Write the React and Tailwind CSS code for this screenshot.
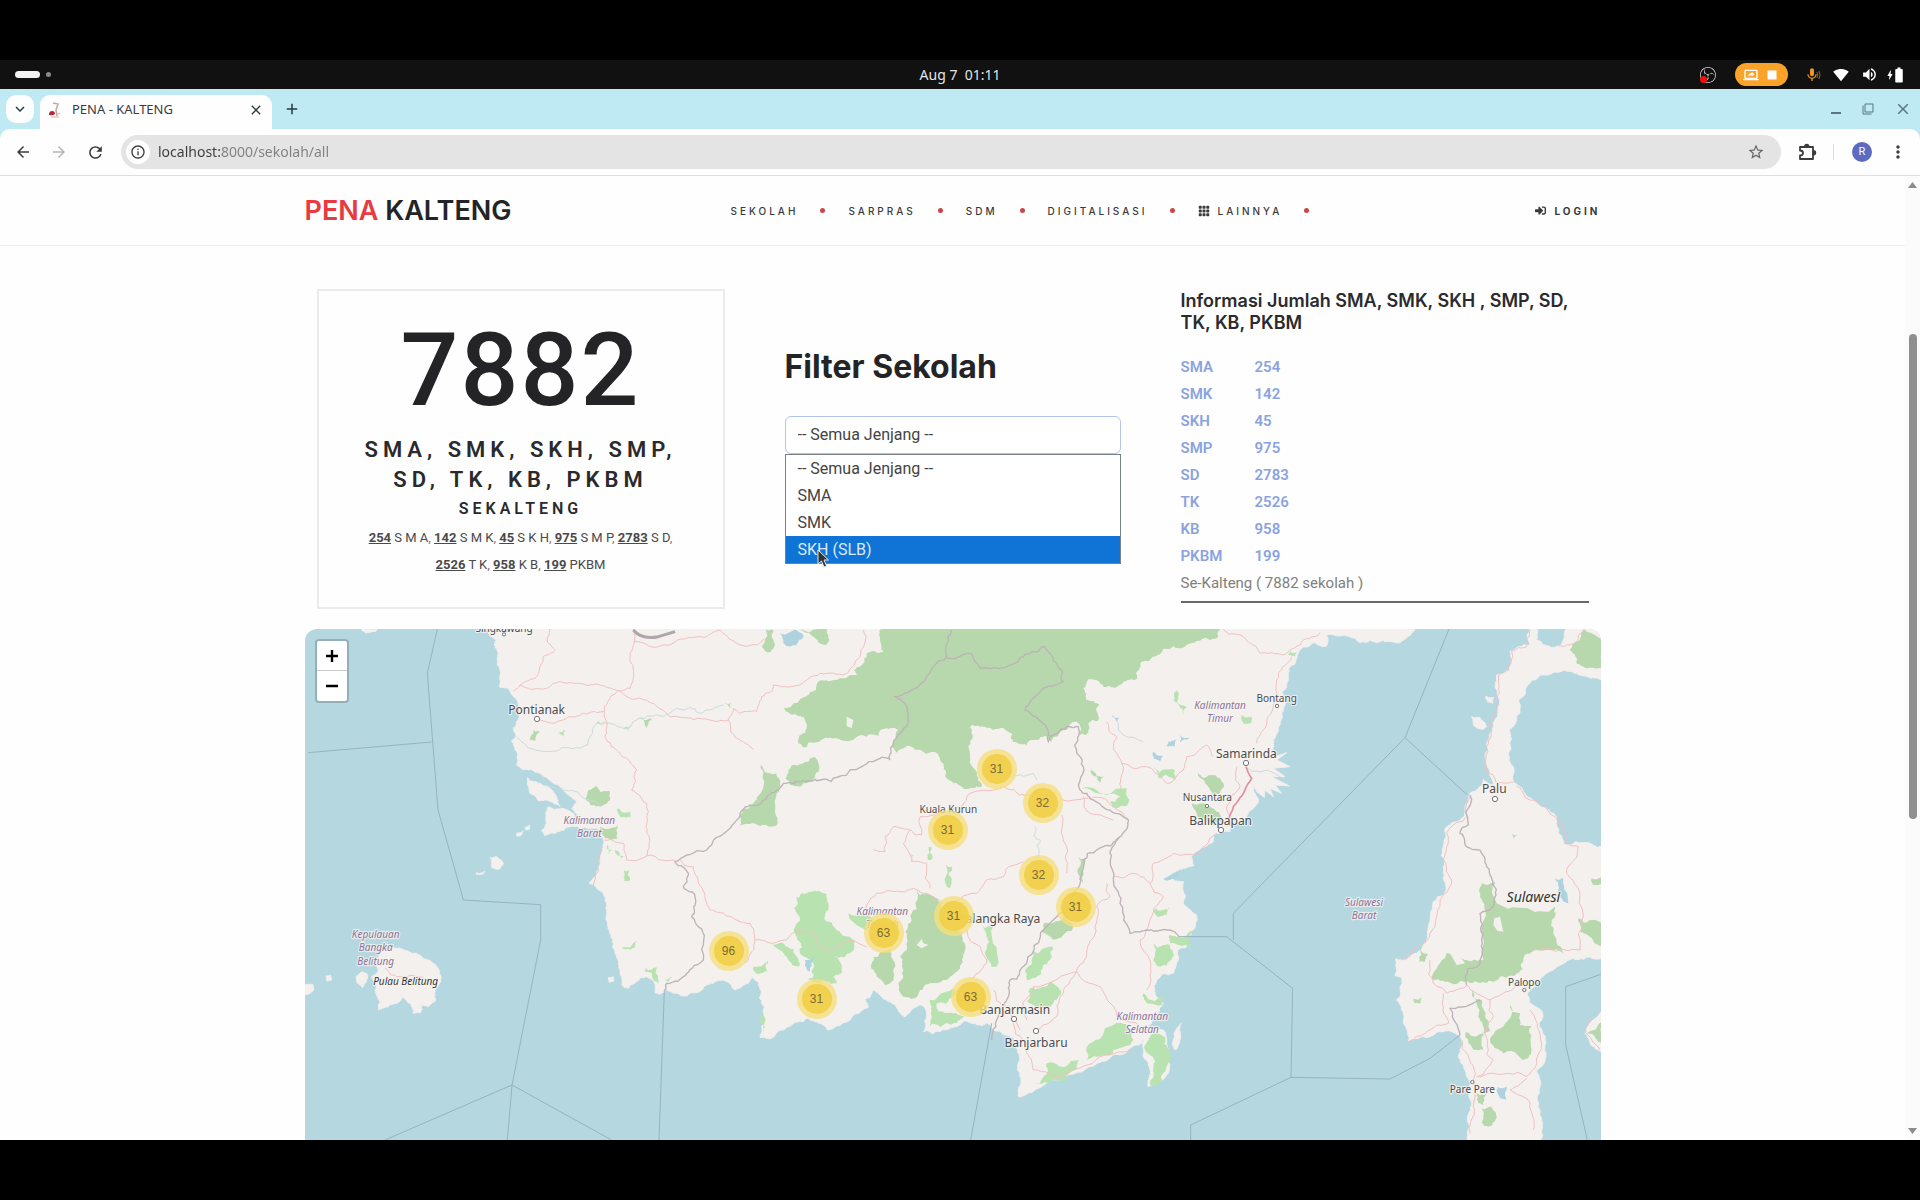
import React from "react";
import {
  MdStarBorder, MdInfoOutline, MdArrowBack, MdArrowForward, MdRefresh,
  MdClose, MdAdd, MdKeyboardArrowDown, MdMoreVert, MdMic, MdSignalWifi4Bar, MdVolumeUp,
  MdBatteryFull, MdBolt, MdOutlineScreenShare, MdStop, MdFilterNone,
} from "react-icons/md";
import { SiObsstudio } from "react-icons/si";
import { BsGrid3X3GapFill } from "react-icons/bs";
import { FaSignInAlt } from "react-icons/fa";

/* ---------- map geometry ---------- */

function rough(points, amp, closed) {
  let seed = 7;
  const rnd = () => {
    seed = (seed * 16807) % 2147483647;
    return seed / 2147483647 - 0.5;
  };
  let pts = [];
  for (let i = 0; i < points.length; i += 2) pts.push([points[i], points[i + 1]]);
  if (closed) pts.push(pts[0]);
  for (let pass = 0; pass < 3; pass++) {
    const out = [];
    for (let i = 0; i < pts.length - 1; i++) {
      const [ax, ay] = pts[i];
      const [bx, by] = pts[i + 1];
      const len = Math.hypot(bx - ax, by - ay);
      out.push(pts[i]);
      if (len > 7) {
        const k = Math.min(len, 60) * amp;
        out.push([(ax + bx) / 2 + rnd() * k, (ay + by) / 2 + rnd() * k]);
      }
    }
    out.push(pts[pts.length - 1]);
    pts = out;
  }
  return "M" + pts.map((p) => p[0].toFixed(0) + " " + p[1].toFixed(0)).join("L") + (closed ? "Z" : "");
}

const LAND = [
  [560,10,590,60,583,75,595,100,592,130,600,165,598,200,630,212,650,240,658,280,650,310,640,325,648,345,635,362,645,390,650,435,670,450,700,452,725,465,760,490,790,510,812,530,830,545,815,565,835,590,862,622,900,632,912,665,905,700,900,735,890,765,868,790,900,812,915,840,920,870,918,900,930,940,937,980,945,1000,955,1030,960,1060,965,1095,985,1105,1010,1085,1040,1070,1065,1092,1065,1118,1080,1122,1100,1110,1130,1120,1160,1128,1200,1115,1240,1090,1280,1085,1305,1110,1325,1100,1345,1090,1355,1070,1375,1085,1382,1110,1385,1150,1392,1200,1386,1235,1380,1252,1415,1255,1450,1230,1480,1210,1520,1195,1545,1205,1582,1230,1610,1218,1650,1200,1706,1160,1695,1140,1718,1110,1740,1125,1770,1145,1795,1172,1812,1190,1840,1165,1862,1155,1875,1165,1880,1190,1875,1225,1870,1235,1920,1235,1970,1220,2000,1203,2030,1215,2060,1208,2080,1230,2120,1245,2142,1255,2155,1300,2153,1350,2158,1400,2155,1430,2200,1415,2280,1380,2360,1345,2440,1305,2500,1280,2525,1270,2540,1230,2560,1190,2590,1150,2565,1125,2570,1080,2620,1060,2632,1000,2640,985,2660,980,2655,960,2680,930,2690,885,2660,860,2650,850,2650,785,2610,770,2650,745,2680,738,2678,705,2710,682,2740,665,2738,645,2790,635,2835,605,2855,570,2875,545,2860,510,2870,480,2900,440,2920,400,2920,370,2935,330,2945,280,2955,240,2945,215,2965,170,2970,140,2990,115,3005,85,3040,68,3078,80,3080,45,3100,45,3180,68,3210,60,3230,68,3250,62,3300,68,3340,35,3350,10],
  [3690,10,3690,75,3630,95,3628,150,3590,165,3585,200,3595,230,3580,310,3560,370,3558,430,3575,475,3580,495,3550,478,3510,520,3495,570,3470,605,3435,625,3430,680,3430,740,3438,800,3432,822,3412,830,3395,870,3385,920,3380,960,3350,1000,3310,1020,3288,1015,3285,1068,3305,1075,3300,1130,3290,1140,3305,1170,3310,1210,3325,1262,3370,1250,3430,1235,3480,1245,3485,1280,3475,1310,3495,1350,3510,1400,3515,1450,3510,1520,3505,1575,3720,1575,3725,1500,3715,1460,3720,1400,3710,1350,3738,1305,3728,1240,3728,1180,3690,1150,3682,1120,3720,1080,3770,1040,3820,1015,3860,1012,3930,1022,3930,680,3850,668,3830,665,3800,675,3775,640,3770,590,3740,565,3710,548,3670,515,3645,490,3640,440,3625,400,3628,330,3650,290,3655,240,3690,190,3720,165,3790,150,3830,160,3870,175,3930,175,3930,10,3810,10,3790,60,3775,78,3730,75,3710,60,3710,10],
  [683,473,700,485,750,505,770,530,780,560,740,540,715,542,690,520],
  [745,560,790,565,820,580,825,600,870,605,890,620,840,625,800,622,765,640,735,647,724,632,738,600],
  [570,713,590,710,610,730,595,748,575,742],
  [235,1050,240,1000,290,985,350,1000,395,1025,415,1045,422,1080,405,1110,405,1145,385,1160,365,1155,362,1178,340,1180,330,1150,305,1130,290,1150,265,1160,235,1170,240,1145,228,1120,215,1070],
  [168,1070,185,1055,203,1065,195,1090,188,1103,170,1088],
  [0,1085,40,1095,42,1110,25,1122,0,1120],
  [78,1067,92,1065,95,1080,82,1084],
  [2528,1270,2540,1225,2590,1230,2602,1280,2610,1335,2600,1365,2560,1392,2545,1400,2550,1350,2530,1310],
  [2622,1240,2643,1210,2640,1260,2626,1290,2616,1270],
  [3905,1175,3870,1210,3855,1240,3870,1270,3905,1295],
  [3515,290,3540,292,3560,320,3545,328,3520,315],
  [3558,228,3580,232,3578,250,3562,245],
  [925,1072,940,1070,942,1083,928,1087],
  [650,640,670,632,665,645,652,650],
  [675,622,690,615,688,628,678,630],
  [530,758,555,755,550,762,530,764],
  [180,20,250,20,225,35,195,38],
];

const DELTA = "M2870 430L2960 398L2930 420L2970 440L2920 445L2955 470L2915 470L2968 498L2925 495L2945 520L2910 505L2920 530L2895 510L2893 532L2870 515L2850 470Z";

const FOREST = [
  [1755,10,1740,60,1752,95,1700,100,1690,130,1660,150,1672,165,1610,180,1565,180,1530,215,1480,250,1452,265,1470,282,1510,290,1520,320,1500,345,1495,370,1510,382,1560,362,1610,355,1700,350,1760,325,1795,330,1775,380,1790,398,1830,378,1850,390,1900,395,1930,430,1935,470,1960,490,2010,505,2045,500,2035,480,2010,430,2005,380,2015,340,2010,322,2050,320,2080,330,2110,325,2135,340,2140,365,2180,378,2200,360,2230,350,2255,365,2290,330,2330,305,2340,345,2365,335,2365,310,2395,300,2398,255,2360,240,2350,205,2365,178,2410,200,2470,185,2512,175,2525,125,2560,110,2620,78,2700,62,2755,50,2775,10],
  [1382,435,1430,460,1440,490,1430,520,1428,618,1320,616,1320,585,1370,540,1390,500],
  [1480,435,1520,425,1545,412,1558,440,1545,470,1500,500,1470,495,1455,475],
  [1850,812,1890,825,1925,850,1930,910,1985,940,1992,1000,1975,1050,1940,1080,1890,1090,1860,1110,1845,1135,1810,1130,1795,1090,1810,1050,1800,1010,1820,950,1835,880],
  [1720,1010,1770,990,1785,1040,1770,1090,1755,1095,1730,1070,1712,1040],
  [2232,910,2290,890,2320,920,2290,945,2260,960,2225,935],
  [2335,712,2355,715,2350,790,2338,780],
  [1398,27,1420,30,1420,85,1405,97,1385,80],
  [1500,27,1580,27,1588,60,1575,75,1540,50],
  [2690,460,2740,465,2770,490,2760,520,2735,520,2715,490],
  [3808,90,3840,60,3850,27,3905,60,3905,145,3860,145,3830,130],
  [3585,785,3545,790,3540,830,3555,870,3550,1020,3505,1022,3470,1010,3440,1000,3415,1035,3395,1075,3430,1082,3490,1085,3540,1090,3600,1070,3650,1060,3670,1020,3710,990,3790,1000,3770,960,3755,900,3765,860,3590,850],
  [3835,895,3880,900,3905,910,3905,980,3870,950,3840,935],
  [3630,1150,3660,1180,3660,1215,3695,1220,3695,1290,3670,1320,3640,1295,3610,1300,3570,1260,3590,1230,3610,1220],
  [3515,1110,3545,1140,3555,1190,3570,1230,3550,1240,3535,1190],
  [3498,1235,3550,1240,3548,1290,3520,1290],
  [3362,990,3385,1000,3375,1025,3358,1025],
  [3340,1135,3365,1133,3362,1150,3345,1150],
  [3530,1420,3560,1420,3550,1455,3535,1450],
  [3545,1465,3575,1460,3590,1490,3565,1520,3545,1510],
  [3860,1240,3905,1205,3905,1270],
  [700,330,720,332,705,362,688,360],
  [1020,290,1055,295,1040,325],
  [2370,450,2410,470,2400,488],
  [3875,775,3905,770,3905,795,3878,795],
  [2675,550,2700,550,2750,575,2770,600,2740,610,2690,590],
  [900,620,953,615,953,660,915,655],
  [865,510,890,498,900,515,930,512,930,540,900,560,870,555,858,540,862,520],
];

const GROVE = [
  [955,565,995,572,992,592,960,592],
  [1035,1045,1070,1042,1075,1090,1060,1080,1055,1058,1035,1056],
  [965,982,1010,962,1005,985,975,988],
  [972,750,987,750,987,783,973,783],
  [1090,1078,1115,1070,1105,1085],
  [2345,505,2480,505,2485,550,2450,565,2430,545,2460,530],
  [1490,830,1530,815,1570,820,1585,850,1575,900,1610,930,1660,960,1650,1000,1600,1010,1625,1060,1600,1070,1610,1090,1570,1080,1560,1090,1520,1080,1540,1030,1500,1000,1490,950,1500,900,1482,865],
  [1410,965,1450,970,1490,1010,1495,1040,1465,1020],
  [1360,1040,1405,1020,1400,1055,1370,1062],
  [1645,880,1700,870,1720,900,1700,930],
  [1890,1140,1960,1105,1970,1120,1910,1150,1915,1175,1960,1180,2000,1190,1960,1210,1890,1220,1892,1180],
  [2045,915,2080,920,2090,1040,2075,1040,2060,980],
  [2200,990,2260,985,2250,1020,2230,1035,2220,1065,2180,1080,2175,1050],
  [2190,1105,2250,1085,2280,1110,2260,1150,2210,1165,2180,1145],
  [2360,1280,2440,1215,2480,1215,2500,1260,2440,1290,2360,1320],
  [2240,1330,2340,1320,2330,1335,2300,1370,2200,1390,2240,1360],
  [2535,1290,2560,1240,2595,1250,2605,1330,2570,1395,2550,1395,2560,1340],
  [2560,970,2610,975,2620,1010,2580,1040,2560,1020],
  [2530,1120,2590,1130,2590,1160,2540,1150],
  [2565,865,2610,860,2600,885,2570,890],
  [2610,945,2680,930,2670,985,2610,970],
  [2825,285,2860,285,2855,310,2830,312],
  [2970,92,2995,95,2985,110,2965,105],
  [1940,735,1955,740,1950,805,1940,800],
  [1885,680,1895,680,1893,720,1885,720],
  [1830,700,1840,705,1835,720],
  [1385,1180,1395,1220,1388,1240],
  [2560,440,2625,450,2625,480,2600,465,2575,475],
  [775,335,795,330,790,352],
  [965,320,990,318,985,332],
  [1275,250,1293,248,1290,265],
  [890,305,915,305,910,315],
  [2630,210,2660,260,2650,285,2620,240],
  [920,675,935,690,925,705],
  [945,690,975,708,965,716],
];

const LAKES = [
  [1440,40,1490,30,1510,50,1470,80,1450,70],
  [2560,395,2595,405,2580,425,2560,415],
  [2605,365,2630,355,2625,380,2600,378],
  [2640,340,2670,355,2640,368],
  [2590,775,2640,745,2635,770,2600,782],
  [3765,775,3790,775,3805,850,3790,845,3775,810],
  [3592,1400,3620,1400,3618,1440,3600,1435],
  [3637,642,3650,645,3640,658],
  [2435,285,2460,292,2450,305],
  [1515,1020,1545,1010,1530,1055,1520,1050],
];

const ROADS = [
  [750,27,745,70,765,90,730,110,715,160,660,195,640,215],
  [660,195,740,205,780,185,830,190,900,195,953,212,990,205,1000,150,990,100,1005,65,1000,27],
  [1000,65,1110,75,1200,50,1260,30,1320,75,1370,75,1395,55],
  [953,212,1040,240,1110,290,1200,295,1285,300,1300,265,1320,280,1370,275,1385,230,1415,215,1420,195,1500,195,1560,160,1640,160,1680,110,1690,30],
  [1285,300,1320,360,1360,388],
  [953,212,912,260,920,320,915,350,960,400,1010,450,995,510,1045,575,1040,640,1050,660,1040,708,1125,722],
  [720,300,790,300,830,288,880,275,912,275],
  [1040,708,980,720,970,670,912,660],
  [905,680,895,750,880,795],
  [1140,720,1180,740,1195,790,1215,830,1230,870,1320,905,1350,910,1365,960,1360,990,1335,1030],
  [1365,960,1460,960,1500,930,1540,940,1570,990,1650,960,1700,980],
  [1690,870,1730,820,1800,815,1840,805,1890,825,1930,850,2030,820,2060,780,2110,770,2120,745,2170,725],
  [1890,805,1880,730,1835,725,1810,670,1830,630,1780,620,1755,650,1755,695,1720,690],
  [1830,630,1865,645,1860,590,1920,580,1980,560,2010,520,2110,500,2160,525,2220,520],
  [2280,535,2350,535,2420,540,2480,600],
  [2285,585,2300,680,2300,760],
  [2420,305,2450,350,2440,390,2465,430,2465,510],
  [2465,430,2540,440,2600,490,2650,450,2660,410,2720,375,2740,410],
  [2350,530,2370,580,2440,600],
  [2760,20,2830,50,2880,100,2960,100,3010,60,3060,38],
  [2975,110,2935,160,2930,230,2900,300,2870,370],
  [2810,440,2820,500,2780,560,2790,620],
  [2440,770,2500,760,2550,790,2560,730,2620,700,2680,705,2750,640],
  [2550,790,2590,830,2550,900,2520,960,2550,1020,2540,1110],
  [2420,790,2430,830,2390,860,2385,920,2360,1000,2330,1055,2200,1100,2170,1160,2180,1200],
  [2330,1055,2280,1130,2270,1190,2210,1230],
  [2330,1055,2400,1100,2450,1190,2520,1220],
  [2140,1210,2170,1260,2200,1350,2280,1370,2400,1310,2500,1280],
  [2000,930,2040,980,2060,1030,2010,1080],
  [2080,1110,2120,1160,2160,1230],
  [3690,30,3680,80,3635,95,3625,150,3595,165,3590,230,3575,330,3560,380,3560,450,3590,490,3640,488],
  [3775,78,3830,65,3850,30],
  [3510,525,3500,590,3440,640,3430,720,3455,780,3420,850,3390,940,3330,1010,3305,1020],
  [3650,500,3720,550,3775,600,3800,670,3835,680,3800,760,3840,820,3840,990,3700,990],
  [3390,1020,3400,1090,3440,1120,3500,1095,3570,1140,3650,1090],
  [3430,1120,3445,1210,3390,1230,3330,1262],
  [3570,1140,3580,1190,3555,1240,3560,1300,3580,1320,3530,1370],
  [3485,1260,3500,1300,3520,1340,3520,1460,3510,1540],
  [3530,1370,3570,1360,3680,1370,3710,1330,3725,1270,3690,1170],
  [3680,1375,3630,1410,3690,1450,3700,1530],
  [255,1045,310,1070,370,1072],
  [3868,1200,3858,1240,3900,1290],
];

const BORDERS = [
  [1955,30,1940,110,1880,170,1835,210,1785,230,1820,260,1825,300,1780,370,1770,420,1740,415,1650,450,1560,480,1500,485,1450,490,1400,530,1350,555,1320,580,1290,625,1220,690,1125,725,1165,760,1150,800,1185,830,1175,890,1195,920,1210,1020,1160,1060,1100,1090,1093,1112],
  [1940,115,2010,100,2040,145,2120,140,2170,110,2235,80,2270,130,2290,185,2230,205,2175,270,2230,310,2245,365,2300,320,2335,320,2325,380,2350,440,2340,510,2370,535,2430,570,2485,600,2460,650,2390,690,2350,720,2340,790,2310,850,2230,930,2180,1030,2130,1080,2120,1140,2090,1200,2075,1260],
  [2460,650,2430,700,2440,780,2460,850,2490,940,2540,930,2600,930,2640,950],
  [3510,525,3505,610,3480,640,3500,680,3540,690,3560,740,3583,800,3580,860,3540,880,3545,960,3540,1030,3505,1045,3500,1095],
  [3540,1140,3450,1165,3480,1245],
];

const SEA_LINES = [
  "M412 27L382 160L414 570L482 810L490 840L722 854V960L636 1395L622 1560",
  "M25 398L395 366", "M636 1395L400 1497L255 1560", "M636 1395L935 1560", "M1093 1112L1077 1560",
  "M2075 1210L2012 1560", "M3447 27L3315 353L2800 880V960", "M3315 353L3502 525",
  "M2640 950H2780L2978 1105L2973 1372L3270 1377L3390 1315L3480 1245", "M2973 1372L2672 1515V1560",
  "M3905 1062L3797 1100V1275L3862 1560",
];

const CITIES = [
  [612, 35, 30, "Singkawang", 612, 43], [710, 282, 36, "Pontianak", 711, 297], [2930, 245, 30, "Bontang", 2931, 258],
  [2839, 413, 36, "Samarinda", 2838, 429], [2722, 544, 30, "Nusantara", 2721, 558], [2762, 614, 36, "Balikpapan", 2763, 630],
  [3583, 520, 36, "Palu", 3585, 537], [3673, 1098, 30, "Palopo", 3673, 1110], [3517, 1418, 30, "Pare Pare", 3517, 1386],
  [1945, 580, 30, "Kuala Kurun"], [2098, 909, 36, "Palangka Raya"], [2144, 1183, 36, "Banjarmasin", 2142, 1197],
  [2208, 1281, 36, "Banjarbaru", 2208, 1233],
];

const REGIONS = [
  [868, 612, "Kalimantan", "Barat"], [2760, 266, "Kalimantan", "Timur"], [1747, 884, "Kalimantan", "Tengah"],
  [2527, 1200, "Kalimantan", "Selatan"], [3192, 857, "Sulawesi", "Barat"], [227, 954, "Kepulauan", "Bangka", "Belitung"],
];

function MapArt() {
  return (
    <svg className="absolute inset-0 h-full w-full" viewBox="15 27 3888 1533" preserveAspectRatio="xMinYMin slice" role="img" aria-label="Peta Kalimantan" fontFamily="Noto Sans, sans-serif">
      <rect x="0" y="0" width="4000" height="3000" fill="#b4d7e0" />
      <g fill="#f4f0ed" stroke="#f1eeee" strokeWidth="3" strokeLinejoin="round">
        {LAND.map((p, i) => <path key={i} d={rough(p, 0.3, true)} />)}
        <path d={DELTA} />
      </g>
      <g fill="#b7d8ac">{FOREST.map((p, i) => <path key={i} d={rough(p, 0.42, true)} />)}</g>
      <g fill="#b9e2b1">{GROVE.map((p, i) => <path key={i} d={rough(p, 0.5, true)} />)}</g>
      <g fill="#f4f0ed">
        <path d="M3583 895L3600 890L3610 935L3592 932L3580 915ZM1850 975L1865 957L1870 970L1885 975L1865 985ZM3450 1000L3470 995L3495 1030L3470 1035ZM1640 290L1660 300L1655 325L1640 318Z" />
      </g>
      <g fill="#aed3df">{LAKES.map((p, i) => <path key={i} d={rough(p, 0.4, true)} />)}</g>
      <g fill="none" stroke="#cbdcdc" strokeWidth="3">
        <path d={rough([650,350,740,395,840,385,890,310,920,310,970,325,1010,300,1090,290,1130,265,1200,280,1270,255], 0.4)} />
        <path d={rough([725,465,790,510,840,525,900,560], 0.4)} />
        <path d={rough([2205,620,2220,660,2215,710], 0.5)} />
        <path d={rough([2120,455,2200,460,2210,480], 0.4)} />
        <path d={rough([2840,445,2900,450,2955,480], 0.3)} />
        <path d={rough([2450,300,2480,350,2530,365], 0.3)} />
      </g>
      <g fill="none" stroke="#f1c0c1" strokeWidth="3">{ROADS.map((p, i) => <path key={i} d={rough(p, 0.3)} />)}</g>
      <path d={rough([2838, 440, 2855, 475, 2830, 520, 2800, 560, 2785, 600], 0.1)} fill="none" stroke="#e0909f" strokeWidth="5" />
      <g fill="none" stroke="#bdb3b8" strokeWidth="4">{BORDERS.map((p, i) => <path key={i} d={rough(p, 0.35)} />)}</g>
      <path d="M1000 30Q1025 60 1075 50L1125 35" fill="none" stroke="#b0a5ab" strokeWidth="9" />
      <g fill="none" stroke="#97b3c2" strokeWidth="3">{SEA_LINES.map((d) => <path key={d} d={d} />)}</g>
      <g textAnchor="middle" stroke="#f6f4f3" strokeOpacity="0.75" strokeWidth="7" strokeLinejoin="round" paintOrder="stroke">
        {REGIONS.map(([x, y, ...lines], i) => (
          <text key={i} fontSize="30" fontStyle="italic" fill="#8d7396">
            {lines.map((t, n) => <tspan key={t} x={x} y={y + n * 40}>{t}</tspan>)}
          </text>
        ))}
        {CITIES.map(([x, y, s, t]) => <text key={t} x={x} y={y} fontSize={s} fill="#4c4c4c">{t}</text>)}
        <text x="317" y="1094" fontSize="30" fontStyle="italic" fill="#333333">Pulau Belitung</text>
        <text x="3700" y="847" fontSize="42" fontStyle="italic" fill="#333333">Sulawesi</text>
      </g>
      <g fill="#ffffff" stroke="#777777" strokeWidth="3">
        {CITIES.filter((c) => c.length > 4).map((c) => <circle key={c[3]} cx={c[4]} cy={c[5]} r={c[2] === 36 ? 8 : 5} />)}
      </g>
    </svg>
  );
}

const CLUSTERS = [
  [692, 140, 31], [738, 174, 32], [643, 201, 31], [734, 246, 32], [771, 278, 31],
  [649, 287, 31], [579, 304, 63], [666, 368, 63], [512, 370, 31], [424, 322, 96],
];

function SchoolMap() {
  return (
    <section className="relative min-h-0 flex-1 overflow-hidden rounded-t-xl">
      <MapArt />
      {CLUSTERS.map(([x, y, n]) => (
        <button key={x} className="absolute flex size-10 -translate-x-1/2 -translate-y-1/2 items-center justify-center rounded-full bg-[#f5de7d]/80" style={{ left: x, top: y }}>
          <span className="flex size-[30px] items-center justify-center rounded-full bg-[#f1cf45]/90 font-['Liberation_Sans',sans-serif] text-xs text-[#7d6b35]">{n}</span>
        </button>
      ))}
      <div className="absolute top-2.5 left-2.5 flex w-[34px] flex-col overflow-hidden rounded border-2 border-[#93b0b8] bg-white">
        <button aria-label="Zoom in" className="flex h-[30px] items-center justify-center border-b border-[#cccccc]">
          <svg width="14" height="14" viewBox="0 0 14 14" stroke="#000" strokeWidth="2.4"><path d="M1 7H13M7 1V13" /></svg>
        </button>
        <button aria-label="Zoom out" className="flex h-[30px] items-center justify-center">
          <svg width="14" height="14" viewBox="0 0 14 14" stroke="#000" strokeWidth="2.4"><path d="M1 7H13" /></svg>
        </button>
      </div>
    </section>
  );
}

/* ---------- desktop and browser chrome ---------- */

function SystemBar() {
  return (
    <div className="grid h-[29px] shrink-0 grid-cols-3 items-center bg-[#111111] font-['Noto_Sans',sans-serif] text-white">
      <div className="flex items-center gap-1.5 pl-[15px]">
        <span className="h-[7px] w-[25px] rounded-full bg-[#f2f2f2]" />
        <span className="size-[5px] rounded-full bg-[#8a8a8a]" />
      </div>
      <div className="text-center text-sm leading-5 whitespace-pre text-[#e4e4e4]">Aug 7  01:11</div>
      <div className="flex items-center justify-end pr-3">
        <span className="relative mr-[19px]">
          <SiObsstudio className="size-4 text-[#d8d8d8]" />
          <span className="absolute bottom-0 left-0 size-[7px] rounded-full bg-[#ee1111]" />
        </span>
        <span className="mr-4 flex h-[23px] w-[53px] items-center justify-center gap-1 rounded-full bg-[#f9a32a]">
          <MdOutlineScreenShare className="size-4" />
          <MdStop className="size-[18px]" />
        </span>
        <span className="mr-3 flex items-center">
          <MdMic className="size-4 text-[#f0981f]" />
          <svg width="5" height="10" viewBox="0 0 5 10" fill="none" stroke="#94611c" className="-ml-1"><path d="M1 2Q2.500 5 1 8M3 1Q5 5 3 9" /></svg>
        </span>
        <MdSignalWifi4Bar className="mr-3 size-4" />
        <MdVolumeUp className="mr-1.5 size-[17px]" />
        <MdBolt className="-mr-1.5 size-3" />
        <MdBatteryFull className="size-[18px]" />
      </div>
    </div>
  );
}

function TabStrip() {
  return (
    <div className="flex h-10 shrink-0 items-start bg-[#bfeaf3] pt-1.5 pl-1.5 text-[#2b3a40]">
      <button aria-label="Search tabs" className="mr-1.5 flex size-7 items-center justify-center rounded-[10px] bg-[#fdfefe]">
        <MdKeyboardArrowDown className="size-[18px]" />
      </button>
      <div className="flex h-[34px] w-[232px] items-center rounded-t-[10px] bg-[#fefefe] pb-1 pl-2">
        <svg width="14" height="16" viewBox="0 0 14 16" fill="none">
          <path d="M5 1L10 2L8 8L9 14" stroke="#c9a9a3" strokeWidth="1.600" />
          <path d="M1 13Q1 9 4 9Q7 9 7 12Q5 14 1 13Z" fill="#a82c34" />
          <path d="M8 13L12 11M3 15L11 15" stroke="#e4a9a9" />
        </svg>
        <span className="ml-2.5 flex-1 font-['Noto_Sans',sans-serif] text-[13px] text-[#3b3b3b]">PENA - KALTENG</span>
        <button aria-label="Close tab" className="mr-2"><MdClose className="size-4" /></button>
      </div>
      <button aria-label="New tab" className="ml-1.5 flex size-7 items-center justify-center"><MdAdd className="size-[18px]" /></button>
      <div className="ml-auto flex h-7 items-center gap-4 pr-2 text-[#5a7488]">
        <button aria-label="Minimize" className="mr-1"><svg width="12" height="12" viewBox="0 0 12 12" fill="currentColor"><path d="M1 9H11V11H1Z" /></svg></button>
        <button aria-label="Restore" className="mr-1"><MdFilterNone className="size-3" /></button>
        <button aria-label="Close window"><MdClose className="size-[18px]" /></button>
      </div>
    </div>
  );
}

function Toolbar() {
  return (
    <div className="bg-[#bfeaf3]">
      <div className="flex h-[47px] items-center rounded-t-[10px] border-b border-[#dedede] bg-[#fefefe] pr-3 pl-3.5 text-[#3c3c3c]">
        <button aria-label="Back" className="mr-[18px]"><MdArrowBack className="size-[18px]" /></button>
        <button aria-label="Forward" className="mr-[18px] text-[#b5b5b5]"><MdArrowForward className="size-[18px]" /></button>
        <button aria-label="Reload" className="mr-4"><MdRefresh className="size-[19px]" /></button>
        <div className="flex h-[34px] flex-1 items-center rounded-full bg-[#e4e4e4] pr-4 pl-[5px]">
          <span className="flex size-6 items-center justify-center rounded-full bg-white"><MdInfoOutline className="size-4" /></span>
          <input
            aria-label="Address"
            className="ml-2 min-w-0 flex-1 bg-[linear-gradient(90deg,#3c3c3c_64px,#808080_64px)] bg-clip-text font-['Noto_Sans',sans-serif] text-sm text-transparent"
            defaultValue="localhost:8000/sekolah/all"
          />
          <button aria-label="Bookmark"><MdStarBorder className="size-[18px] text-[#666666]" /></button>
        </div>
        <button aria-label="Extensions" className="ml-[17px]">
          <svg width="19" height="19" viewBox="0 0 19 19" fill="none" stroke="currentColor" strokeWidth="1.800" strokeLinejoin="round">
            <path d="M2 4H15V16H2V12.500Q5 12.500 5 10Q5 7.500 2 7.500Z" />
            <path d="M7 3.500A1.800 1.800 0 0 1 10.600 3.500ZM15.500 8A1.800 1.800 0 0 1 15.500 11.600Z" fill="currentColor" />
          </svg>
        </button>
        <span className="mx-4 h-4 w-px bg-[#bfe6ea]" />
        <button className="ml-0.5 flex size-5 items-center justify-center rounded-full bg-[#5c6bc0] font-['Roboto',sans-serif] text-[11px] text-white">R</button>
        <button aria-label="Menu" className="ml-4"><MdMoreVert className="size-5" /></button>
      </div>
    </div>
  );
}

/* ---------- site ---------- */

const NAV = ["SEKOLAH", "SARPRAS", "SDM", "DIGITALISASI", "LAINNYA"];

function Navbar() {
  return (
    <header className="shrink-0 border-b border-[#efefef]">
      <div className="mx-auto flex h-[69px] max-w-[1296px] items-center justify-between font-['Inter',sans-serif] text-[#3a3a3a]">
        <a href="#home" className="w-[426px] text-[27px] leading-8 font-semibold text-[#232426]"><span className="text-[#e83b41]">PENA</span> KALTENG</a>
        <nav className="flex flex-1 items-center text-[10px] leading-4 tracking-[3px]">
          {NAV.map((t) => (
            <a key={t} href={"#" + t.toLowerCase()} className="flex items-center font-medium">
              {t === "LAINNYA" && <BsGrid3X3GapFill className="mr-2 size-3" />}
              {t}
              <span className="mr-[23px] ml-[22px] size-[5px] rounded-full bg-[#c9474c]" />
            </a>
          ))}
        </nav>
        <a href="#login" className="flex items-center gap-2 text-[10px] leading-4 font-bold tracking-[3px]"><FaSignInAlt className="size-[11px]" />LOGIN</a>
      </div>
    </header>
  );
}

const COUNTS = [["SMA", 254], ["SMK", 142], ["SKH", 45], ["SMP", 975], ["SD", 2783], ["TK", 2526], ["KB", 958], ["PKBM", 199]];
const SPACED = ["S M A", "S M K", "S K H", "S M P", "S D", "T K", "K B", "PKBM"];

function Summary() {
  return (
    <div className="px-3">
      <div className="h-full border-2 border-[#ebebeb] py-[29px] text-center text-[#2a2a2c]">
        <div className="text-[102px] leading-[100px] font-medium tracking-[2px] text-[#242426]">7882</div>
        <div className="mt-[15px] text-[22px] leading-[30px] font-semibold tracking-[5px]">SMA, SMK, SKH, SMP,<br />SD, TK, KB, PKBM</div>
        <div className="mt-0.5 text-base leading-6 font-semibold tracking-[4px]">SEKALTENG</div>
        <p className="mt-[3px] text-[13px] leading-[27px] text-[#4a4a4c]">
          {COUNTS.map(([, n], i) => (
            <React.Fragment key={i}>
              <b className="underline">{n}</b> {SPACED[i]}{i < 7 && <span className="text-[#a0686c]">,</span>}
              {i === 4 ? <br /> : " "}
            </React.Fragment>
          ))}
        </p>
      </div>
    </div>
  );
}

const LEVELS = ["-- Semua Jenjang --", "SMA", "SMK", "SKH (SLB)"];

function Filter() {
  return (
    <div className="px-12 pt-[59px]">
      <h2 className="font-['Inter',sans-serif] text-[32px] leading-[38px] font-bold whitespace-nowrap text-[#242426]">
        <label htmlFor="level">Filter Sekolah</label>
      </h2>
      <div className="relative mt-[30px] text-base text-[#444444]">
        <select id="level" className="block h-[38px] w-full appearance-none rounded-md border border-[#b3c3ea] bg-white px-3">
          {LEVELS.map((l) => <option key={l}>{l}</option>)}
        </select>
        <ul role="listbox" className="absolute top-full right-0 left-0 z-10 border border-[#7a8086] bg-white">
          {LEVELS.map((l, i) => (
            <li key={l} role="option" aria-selected={i === 3} className={i === 3 ? "h-[27px] bg-[#1073d6] px-3 leading-[27px] text-[#dceafa]" : "h-[27px] px-3 leading-[27px]"}>{l}</li>
          ))}
        </ul>
        <svg className="absolute top-[133px] left-8 z-20" width="12" height="19" viewBox="0 0 12 19">
          <path d="M1 1V15L4.500 12L7 18L9.500 17L7 11H11.500Z" fill="#333" stroke="#e8e8e8" />
        </svg>
      </div>
    </div>
  );
}

function Info() {
  return (
    <div className="px-3 pt-px text-[15px]">
      <h3 className="mb-5 font-['Inter',sans-serif] text-[18px] leading-[22px] font-semibold whitespace-nowrap text-[#2b2b2d]">Informasi Jumlah SMA, SMK, SKH , SMP, SD,<br />TK, KB, PKBM</h3>
      <table className="text-left leading-[27px] text-[#8aa3e0]">
        <tbody>
          {COUNTS.map(([k, v]) => (
            <tr key={k}><th scope="row" className="w-[74px] p-0 font-semibold">{k}</th><td className="p-0 font-semibold">{v}</td></tr>
          ))}
        </tbody>
      </table>
      <p className="leading-[27px] text-[#808080]">Se-Kalteng ( 7882 sekolah )</p>
      <hr className="mt-1 border-t-2 border-[#68686c]" />
    </div>
  );
}

export default function App() {
  return (
    <div className="flex h-screen flex-col bg-black py-[60px]">
      <SystemBar />
      <TabStrip />
      <Toolbar />
      <div className="flex min-h-0 flex-1 bg-[#fefefe] font-['Roboto',sans-serif]">
        <div className="flex min-w-0 flex-1 flex-col">
          <Navbar />
          <main className="mx-auto flex min-h-0 w-full max-w-[1296px] flex-1 flex-col pt-[43px]">
            <div className="mb-5 grid shrink-0 grid-cols-3">
              <Summary />
              <Filter />
              <Info />
            </div>
            <SchoolMap />
          </main>
        </div>
        <div className="flex w-[15px] flex-col items-center bg-[#fbfbfb] py-1.5" aria-hidden="true">
          <svg width="9" height="6" viewBox="0 0 9 6"><path d="M0 6L4.500 0L9 6Z" fill="#8b8b8b" /></svg>
          <div className="flex w-full flex-1 flex-col items-center pt-[146px]">
            <div className="h-[485px] w-2 rounded-full bg-[#8f8f8f]" />
          </div>
          <svg width="9" height="6" viewBox="0 0 9 6"><path d="M0 0L4.500 6L9 0Z" fill="#8b8b8b" /></svg>
        </div>
      </div>
    </div>
  );
}
